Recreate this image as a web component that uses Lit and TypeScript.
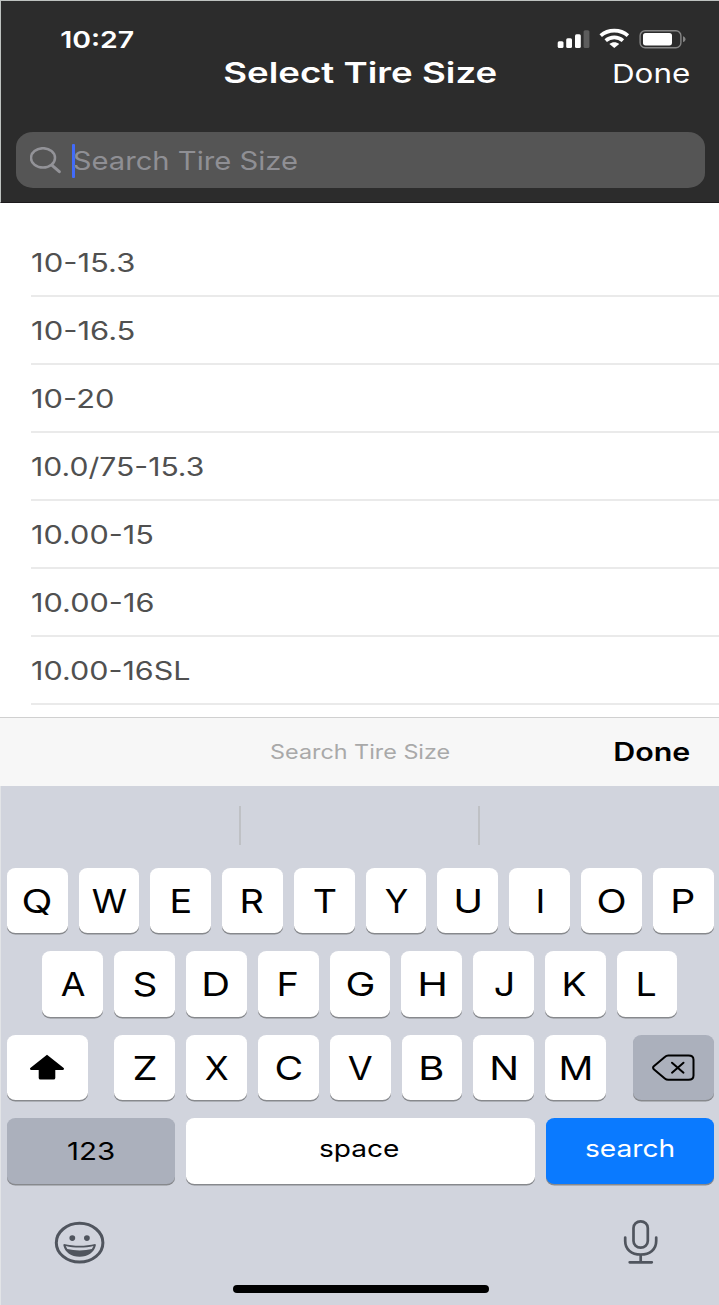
import { LitElement, html, css } from "lit";
import { customElement, property, state } from "lit/decorators.js";

const FAMILY = 'Inter, "Liberation Sans", sans-serif';

/** Room kept on each side of a label for the antialiased edge of its outer glyphs. */
const EDGE = 0.4;

/** A label whose glyphs are widened so that their ink spans `ink` pixels. */
@customElement("wide-label")
class WideLabel extends LitElement {
  @property() text = "";
  @property({ type: Number }) ink = 0;
  @property({ type: Number }) size = 25;
  @property({ type: Number }) weight = 400;
  @state() private scale = 1;
  @state() private bearing = 0;

  static styles = css`
    :host { display: block; flex: none; }
    .box { display: block; overflow: visible; }
    .glyphs {
      display: block;
      width: max-content;
      white-space: pre;
      line-height: 1;
      font-family: Inter, "Liberation Sans", sans-serif;
      transform-origin: 0 50%;
    }
  `;

  willUpdate() {
    const ctx = document.createElement("canvas").getContext("2d")!;
    ctx.font = `${this.weight} ${this.size}px ${FAMILY}`;
    const advance = ctx.measureText(this.text).width;
    ctx.font = `${this.weight} ${this.size * 10}px ${FAMILY}`;
    const m = ctx.measureText(this.text);
    // Ink is read at ten times the size for precision, then brought back by the ratio of advances.
    const ratio = m.width > 0 ? advance / m.width : 0.1;
    const inkWidth = (m.actualBoundingBoxLeft + m.actualBoundingBoxRight) * ratio;
    this.scale = inkWidth > 0 ? (this.ink - 2 * EDGE) / inkWidth : 1;
    this.bearing = m.actualBoundingBoxLeft * ratio * this.scale + EDGE;
  }

  render() {
    return html`<span class="box" style="width:${this.ink}px;height:${this.size}px"
      ><span
        class="glyphs"
        style="font-size:${this.size}px;font-weight:${this.weight};transform:translateX(${this.bearing}px) scaleX(${this.scale})"
        >${this.text}</span></span>`;
  }
}

const label = (text: string, ink: number, size: number, weight = 400) =>
  html`<wide-label .text=${text} .ink=${ink} .size=${size} .weight=${weight}></wide-label>`;

const SIZES: [string, number][] = [
  ["10-15.3", 102],
  ["10-16.5", 102],
  ["10-20", 81],
  ["10.0/75-15.3", 171],
  ["10.00-15", 120.5],
  ["10.00-16", 121],
  ["10.00-16SL", 157.5],
];

const ROW1: [string, number][] = [
  ["Q", 28], ["W", 35], ["E", 18.5], ["R", 21.5], ["T", 22],
  ["Y", 23], ["U", 24], ["I", 4.8], ["O", 27.3], ["P", 21],
];
const ROW2: [string, number][] = [
  ["A", 24.3], ["S", 22], ["D", 24.5], ["F", 18], ["G", 26.5],
  ["H", 24.7], ["J", 17.3], ["K", 22.3], ["L", 17.8],
];
const ROW3: [string, number][] = [
  ["Z", 22], ["X", 23.3], ["C", 26], ["V", 24.5], ["B", 22], ["N", 24.3], ["M", 29.7],
];

@customElement("app-root")
class AppRoot extends LitElement {
  static styles = css`
    :host {
      display: block;
      width: 719px;
      height: 1305px;
      overflow: hidden;
      background: #fff;
      font-family: Inter, "Liberation Sans", sans-serif;
    }
    * { box-sizing: border-box; }
    svg { display: block; flex: none; }
    .screen { display: flex; flex-direction: column; height: 1305px; }

    .header {
      height: 203px;
      background: #2c2c2c;
      color: #fff;
      border-top: 1px solid #bec2c0;
      border-left: 1px solid #bec2c0;
      border-bottom: 1px solid #1c1a1c;
    }
    .status {
      display: flex;
      align-items: center;
      justify-content: space-between;
      height: 50px;
      padding: 27px 33px 0 60px;
    }
    .titlebar {
      display: grid;
      grid-template-columns: 1fr auto 1fr;
      align-items: center;
      height: 42px;
      padding: 2px 30px 0 30px;
    }
    .titlebar .done { justify-self: end; padding-top: 2px; }
    .search {
      display: flex;
      align-items: center;
      width: 689px;
      height: 56px;
      margin: 39px 0 0 15px;
      padding: 1px 0 0 14px;
      border-radius: 17px / 15px;
      background: #555;
      color: #8f8f94;
    }
    .caret { width: 3px; height: 34px; border-radius: 1px; margin: 0 -1px 0 11px; background: #426bfa; }
    .search wide-label { padding-top: 1px; }

    .list { height: 514px; padding: 26px 0 0 31px; overflow: hidden; color: #505050; background: #fff; }
    .item { display: flex; align-items: center; height: 68px; padding: 2px 0 0 1px; border-bottom: 2px solid #eaeaea; }

    .accessory {
      display: grid;
      grid-template-columns: 1fr auto 1fr;
      align-items: center;
      height: 69px;
      padding: 1px 29.5px 0 30.5px;
      border-top: 1px solid #d0d0d0;
      background: #f7f7f7;
      color: #000;
    }
    .accessory .hint { color: #a9a9a9; padding-top: 1px; }
    .accessory .done { justify-self: end; }

    .keyboard {
      display: flex;
      flex-direction: column;
      flex: 1;
      background: #d1d4dd;
      border-left: 1px solid #e2e4e7;
      color: #000;
    }
    .suggest { display: grid; grid-template-columns: 240px 239px 1fr; height: 82px; padding: 20px 0 23px; }
    .slot { border-right: 2px solid #bfc1c5; }
    .slot:last-child { border-right: 0; }

    .keys { display: flex; flex-direction: column; gap: 18px; padding: 0 5.3px 0 5.7px; }
    .row { display: flex; gap: 11px; justify-content: center; height: 65.4px; }
    .home-row { padding-right: 0.6px; }
    .key {
      display: flex;
      align-items: center;
      justify-content: center;
      width: 60.8px;
      height: 65.4px;
      padding: 1.6px 0 0 0.6px;
      border-radius: 8.5px / 7.5px;
      background: #fff;
      box-shadow: 0 1.5px 0 #87898d;
    }
    .mod { width: 81px; padding: 0; }
    .shift { margin-right: 15.6px; }
    .delete { margin-left: 15.6px; }
    .grey { background: #abb0bc; }
    .numbers, .go { width: 168.2px; }
    .space { flex: 1; padding: 0 2px 3px 0; }
    .go { background: #0a7aff; color: #fff; padding-bottom: 5px; }

    .tray { display: flex; justify-content: space-between; height: 101px; padding: 35px 61px 0 53px; }
    .emoji { margin-top: 2.8px; }
    .home { width: 256px; height: 8px; margin-left: 231.5px; border-radius: 4px; background: #000; }
  `;

  private keyOf([ch, ink]: [string, number]) {
    return html`<div class="key">${label(ch, ink, 33)}</div>`;
  }

  private statusIcons() {
    return html`<svg width="129" height="23" viewBox="557 28 129 23" fill="#fff">
      <rect x="557.7" y="41.3" width="5.8" height="6.8" rx="1.5" />
      <rect x="566.2" y="38.2" width="5.8" height="9.9" rx="1.5" />
      <rect x="575" y="34.2" width="5.8" height="13.9" rx="1.5" />
      <rect x="583.6" y="30.3" width="5.8" height="17.8" rx="1.5" fill="#5c5c5c" />
      <g fill="none" stroke="#fff" stroke-width="3.7">
        <path d="M600.7 35.6C608.3 28.9 620.3 28.9 627.9 35.6" />
        <path d="M605.7 40.6C610.7 36.3 617.9 36.3 622.9 40.6" />
      </g>
      <path d="M609.4 43.9C612.4 41.6 616.2 41.6 619.2 43.9L614.3 48.1Z" />
      <rect x="640.1" y="30.7" width="40.8" height="17" rx="5" fill="none" stroke="#858585" stroke-width="1.4" />
      <rect x="643" y="32.9" width="29" height="12.5" rx="2.6" />
      <path d="M683 36.2C686.3 37 686.3 41.3 683 42.1Z" fill="#858585" />
    </svg>`;
  }

  render() {
    return html`<div class="screen">
      <div class="header">
        <div class="status">${label("10:27", 72.5, 23.5, 600)}${this.statusIcons()}</div>
        <div class="titlebar">
          <span></span>
          ${label("Select Tire Size", 272.5, 28.5, 600)}
          <div class="done">${label("Done", 75.5, 26)}</div>
        </div>
        <div class="search">
          <svg width="31" height="27" viewBox="30 147 31 27" fill="none" stroke="#939398" stroke-width="2.5">
            <ellipse cx="43" cy="157.9" rx="12" ry="9.7" />
            <path d="M51.8 165.2L59.3 171.7" stroke-width="3" stroke-linecap="round" />
          </svg>
          <div class="caret"></div>
          ${label("Search Tire Size", 223, 25.3)}
        </div>
      </div>

      <div class="list">
        ${SIZES.map(([text, ink]) => html`<div class="item">${label(text, ink, 25.5)}</div>`)}
      </div>

      <div class="accessory">
        <span></span>
        <div class="hint">${label("Search Tire Size", 178.5, 19.7)}</div>
        <div class="done">${label("Done", 74.5, 25, 600)}</div>
      </div>

      <div class="keyboard">
        <div class="suggest">
          <div class="slot"></div><div class="slot"></div><div class="slot"></div>
        </div>
        <div class="keys">
          <div class="row">${ROW1.map(this.keyOf)}</div>
          <div class="row home-row">${ROW2.map(this.keyOf)}</div>
          <div class="row">
            <div class="key mod shift">
              <svg width="36" height="26" viewBox="29.5 1054.5 36 26">
                <path d="M47.5 1055.3L64.2 1068.6Q65.3 1070.3 63 1070.4H55.8V1078.5Q55.8 1080 54 1080H41Q39.2 1080 39.2 1078.5V1070.4H32Q29.7 1070.3 30.8 1068.6Z" />
              </svg>
            </div>
            ${ROW3.map(this.keyOf)}
            <div class="key mod delete grey">
              <svg width="43" height="27" viewBox="651.5 1053.5 43 27" fill="none" stroke="#000" stroke-width="2" stroke-linecap="round" stroke-linejoin="round">
                <path d="M667.8 1055H688Q693 1055 693 1059.2V1075Q693 1079.3 688 1079.3H667.8Q665.8 1079.3 664.3 1078L653.3 1068.8Q651.9 1067.2 653.3 1065.8L664.3 1056.4Q665.8 1055 667.8 1055Z" />
                <path d="M671.5 1062.2L683 1072.2M683 1062.2L671.5 1072.2" />
              </svg>
            </div>
          </div>
          <div class="row">
            <div class="key numbers grey">${label("123", 46, 24.7)}</div>
            <div class="key space">${label("space", 78.5, 24)}</div>
            <div class="key go">${label("search", 87.5, 24)}</div>
          </div>
        </div>
        <div class="tray">
          <svg class="emoji" width="51" height="43" viewBox="53.5 1221.5 51 43" fill="none" stroke="#50555e" stroke-width="3">
            <ellipse cx="79.1" cy="1243.2" rx="23.3" ry="19.4" />
            <g fill="#50555e" stroke="none">
              <ellipse cx="71.8" cy="1238.6" rx="2.9" ry="2.8" />
              <ellipse cx="86.4" cy="1238.6" rx="2.9" ry="2.8" />
              <path fill-rule="evenodd" d="M63.6 1244.4C73 1246.8 85.5 1246.8 94.6 1244.4Q95.6 1244.6 95.3 1246C93.6 1253 87.5 1257.2 79.1 1257.2C70.7 1257.2 64.6 1253 62.9 1246Q62.6 1244.6 63.6 1244.4ZM65.2 1246.6L66.8 1249.6C74 1251.5 84.3 1251.5 91.4 1249.6L93 1246.6C85 1248.6 73.4 1248.6 65.2 1246.6Z" />
            </g>
          </svg>
          <svg width="35" height="46" viewBox="623 1219 35 46" fill="none" stroke="#50555e" stroke-width="2.7" stroke-linecap="round">
            <rect x="633.5" y="1221.3" width="14.3" height="26.4" rx="7.1" ry="6.6" />
            <path d="M625.2 1237.5V1241C625.2 1249.5 631.5 1254.5 640.7 1254.5S656.2 1249.5 656.2 1241V1237.5M640.7 1254.5V1262M629.7 1262.3H651.8" />
          </svg>
        </div>
        <div class="home"></div>
      </div>
    </div>`;
  }
}
